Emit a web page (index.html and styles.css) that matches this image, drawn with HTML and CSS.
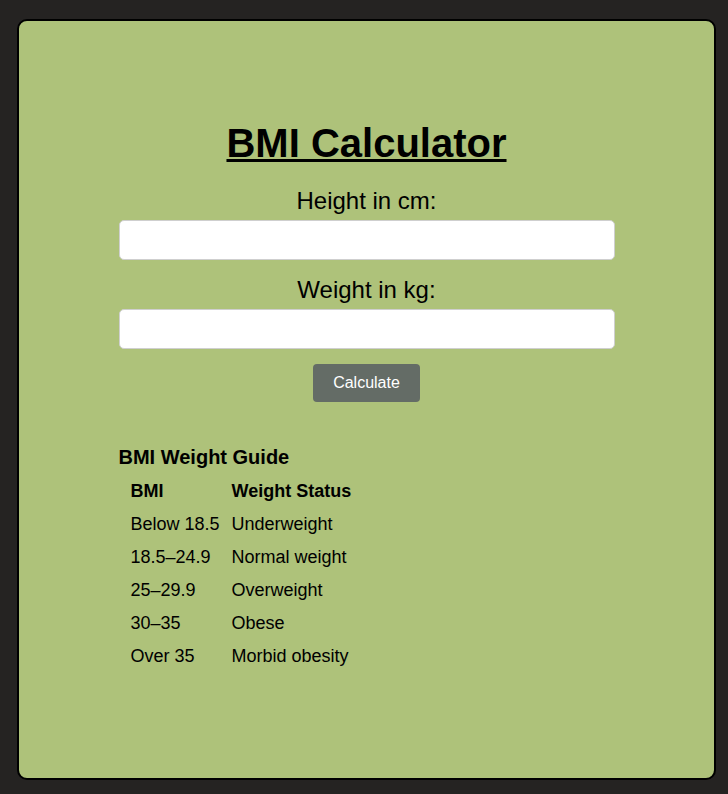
FILE: index.html
```html
<!DOCTYPE html>
<html lang="en">
<head>
<meta charset="utf-8">
<title>BMI Calculator</title>
<link rel="stylesheet" href="styles.css">
</head>
<body>
  <main class="card">
    <div class="content">
      <h1 class="title">BMI Calculator</h1>
      <label class="label" for="height">Height in cm:</label>
      <input class="field" id="height" type="text">
      <label class="label label-second" for="weight">Weight in kg:</label>
      <input class="field" id="weight" type="text">
      <button class="btn" type="button">Calculate</button>
      <section class="guide">
        <h2 class="guide-title">BMI Weight Guide</h2>
        <table class="guide-table">
          <thead>
            <tr><th class="col-bmi">BMI</th><th>Weight Status</th></tr>
          </thead>
          <tbody>
            <tr><td class="col-bmi">Below 18.5</td><td>Underweight</td></tr>
            <tr><td class="col-bmi">18.5–24.9</td><td>Normal weight</td></tr>
            <tr><td class="col-bmi">25–29.9</td><td>Overweight</td></tr>
            <tr><td class="col-bmi">30–35</td><td>Obese</td></tr>
            <tr><td class="col-bmi">Over 35</td><td>Morbid obesity</td></tr>
          </tbody>
        </table>
      </section>
    </div>
  </main>
</body>
</html>
```
FILE: styles.css
```css
* { box-sizing: border-box; }
html, body { height: 794px; margin: 0; }
body {
  background: #252322;
  padding: 19px 12px 14px 17px;
  font-family: "Liberation Sans", Arial, sans-serif;
  color: #000;
  display: flex;
}
.card {
  flex: 1;
  background: #aec27a;
  border: 2px solid #000;
  border-radius: 10px;
  display: flex;
  justify-content: center;
  padding-top: 99px;
}
.content {
  width: 496px;
  display: flex;
  flex-direction: column;
}
.title {
  margin: 0;
  font-size: 40px;
  line-height: 46px;
  font-weight: bold;
  text-decoration: underline;
  text-decoration-thickness: 3px;
  text-underline-offset: 2px;
  text-align: center;
}
.label {
  margin-top: 21px;
  font-size: 24px;
  line-height: 28px;
  text-align: center;
}
.label-second { margin-top: 16px; }
.field {
  margin-top: 5px;
  height: 40px;
  width: 100%;
  background: #fff;
  border: 1px solid #cfcfcf;
  border-radius: 5px;
  font: inherit;
  font-size: 16px;
  padding: 0 10px;
}
.btn {
  align-self: center;
  margin-top: 15px;
  height: 38px;
  padding: 0 20px;
  background: #646c66;
  color: #fff;
  border: none;
  border-radius: 4px;
  font-family: "Liberation Sans", Arial, sans-serif;
  font-size: 16px;
  cursor: pointer;
}
.guide { margin-top: 44px; }
.guide-title {
  margin: 0;
  font-size: 20px;
  line-height: 23px;
  font-weight: bold;
}
.guide-table {
  margin: 6px 0 0 12px;
  border-collapse: collapse;
  font-size: 18px;
}
.guide-table th,
.guide-table td {
  padding: 0;
  height: 33px;
  text-align: left;
  vertical-align: middle;
}
.guide-table th { font-weight: bold; }
.col-bmi { width: 101px; }
```
